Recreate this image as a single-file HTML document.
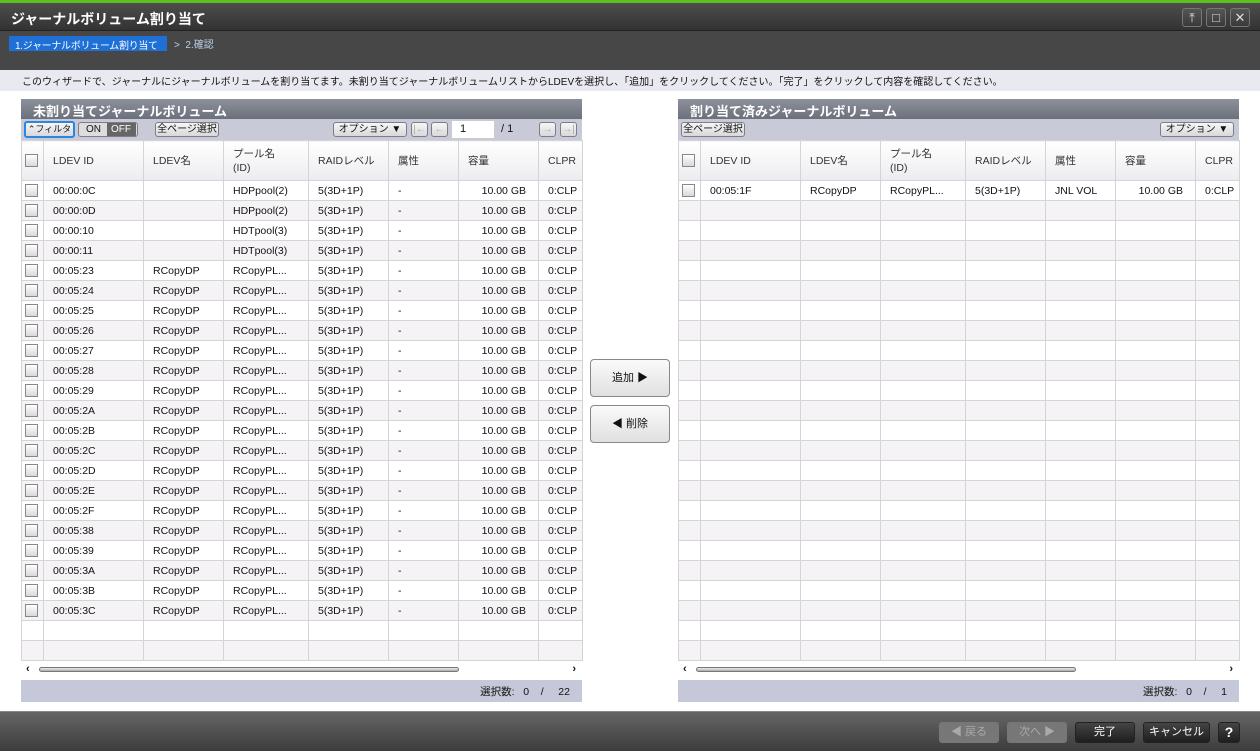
<!DOCTYPE html>
<html><head><meta charset="utf-8"><style>
*{margin:0;padding:0;box-sizing:border-box}
body{width:1260px;height:751px;overflow:hidden;background:#fff;font-family:"Liberation Sans","Noto Sans CJK JP",sans-serif;font-size:11px;color:#111;position:relative}
.abs{position:absolute}
#top{left:0;top:0;width:1260px;height:3px;background:#5fbf1f}
#title{left:0;top:3px;width:1260px;height:28px;background:linear-gradient(#4e4e4e,#333);color:#fff;font-size:14px;font-weight:bold;padding:6px 11px;border-bottom:1px solid #222}
#crumb{left:0;top:31px;width:1260px;height:39px;background:#474747}
#crumb .s1{position:absolute;left:9px;top:5px;width:158px;height:15px;background:#1e6fd6;color:#fff;padding:1px 6px;font-size:10px;white-space:nowrap;overflow:hidden;letter-spacing:-0.3px}
#crumb .s2{position:absolute;left:174px;top:5px;color:#bcd0ea;font-size:10px;white-space:nowrap}
#desc{left:0;top:70px;width:1260px;height:21px;background:#e9e9f1;padding:3px 22px;font-size:10px;white-space:nowrap}
.wc{top:8px;width:20px;height:19px;border:1px solid #777;border-radius:3px;background:linear-gradient(#555,#3a3a3a);color:#ddd;text-align:center;font-size:13px;line-height:17px}
.ph{height:20px;background:linear-gradient(#8d919c,#6b707b);color:#fff;font-weight:bold;font-size:13px;padding:2px 12px;white-space:nowrap}
.tb{height:21px;background:#c9cad8;position:relative}
.btn{position:absolute;height:15px;border:1px solid #7d7d88;border-radius:3px;background:linear-gradient(#f6f6f6,#d8d8dc);font-size:10px;line-height:13px;text-align:center;white-space:nowrap;overflow:hidden}
table{border-collapse:collapse;table-layout:fixed;background:#fff}
td,th{height:20px;border:1px solid #d4d4d8;white-space:nowrap;overflow:hidden;padding-left:9px;font-weight:normal;text-align:left;font-size:10.5px}
th{height:40px;background:linear-gradient(#fff,#ececf0);color:#333;line-height:14px}
tr.a td{background:#fff}
tr.b td{background:#f6f3f6}
td.c,th.c{padding-left:3px}
.cb{display:inline-block;width:13px;height:13px;border:1px solid #888;background:linear-gradient(#fff,#d8d8d8);vertical-align:middle}
td.r{text-align:right;padding-right:12px}
.sc{height:19px;background:#fff;position:relative}
.ft{height:22px;background:#c5c8d8;text-align:right;padding:4px 12px;font-size:10.5px}
.mid{width:80px;height:38px;border:1px solid #888;border-radius:4px;background:linear-gradient(#fafafa,#e0e0e0);text-align:center;line-height:36px;font-size:11px}
#foot{left:0;top:711px;width:1260px;height:40px;background:linear-gradient(#666,#3c3c3c);border-top:1px solid #888}
.fb{position:absolute;top:10px;height:21px;border:1px solid #222;border-radius:3px;background:linear-gradient(#444,#1e1e1e);color:#fff;text-align:center;line-height:19px;font-size:11px}
.fb.d{background:#777;border-color:#777;color:#aaa}
</style></head><body>
<div id="top" class="abs"></div>
<div id="title" class="abs">ジャーナルボリューム割り当て</div>
<div class="abs wc" style="left:1182px">&#x2912;</div>
<div class="abs wc" style="left:1206px">&#9633;</div>
<div class="abs wc" style="left:1230px">&#10005;</div>
<div id="crumb" class="abs"><div class="s1">1.ジャーナルボリューム割り当て</div><div class="s2">&gt;&nbsp; 2.確認</div></div>
<div id="desc" class="abs">このウィザードで、ジャーナルにジャーナルボリュームを割り当てます。未割り当てジャーナルボリュームリストからLDEVを選択し、「追加」をクリックしてください。「完了」をクリックして内容を確認してください。</div>

<div class="abs" style="left:21px;top:99px;width:561px">
<div class="ph">未割り当てジャーナルボリューム</div>
<div class="tb">
<div class="btn" style="left:3px;top:2px;width:51px;height:17px;border:2px solid #2b86e0;line-height:13px;font-size:9px">&#8963;フィルタ</div>
<div class="btn" style="left:57px;top:3px;width:60px;background:#ddd"><span style="display:inline-block;width:26px">ON</span><span style="display:inline-block;width:29px;background:#666;color:#fff">OFF</span></div>
<div class="btn" style="left:134px;top:3px;width:64px">全ページ選択</div>
<div class="btn" style="left:312px;top:3px;width:74px">オプション ▼</div>
<div class="btn" style="left:390px;top:3px;width:17px;color:#aaa">|←</div>
<div class="btn" style="left:410px;top:3px;width:17px;color:#aaa">←</div>
<div style="position:absolute;left:431px;top:2px;width:42px;height:17px;background:#fff;padding:2px 8px">1</div>
<div style="position:absolute;left:480px;top:4px">/ 1</div>
<div class="btn" style="left:518px;top:3px;width:17px;color:#aaa">→</div>
<div class="btn" style="left:539px;top:3px;width:17px;color:#aaa">→|</div>
</div>
<table style="width:561px">
<colgroup><col style="width:22px"><col style="width:100px"><col style="width:80px"><col style="width:85px"><col style="width:80px"><col style="width:70px"><col style="width:80px"><col style="width:44px"></colgroup>
<tr><th class="c"><span class="cb"></span></th><th>LDEV ID</th><th>LDEV名</th><th>プール名<br>(ID)</th><th>RAIDレベル</th><th>属性</th><th>容量</th><th>CLPR</th></tr>
<tr class="a"><td class="c"><span class="cb"></span></td><td>00:00:0C</td><td></td><td>HDPpool(2)</td><td>5(3D+1P)</td><td>-</td><td class="r">10.00 GB</td><td>0:CLP</td></tr>
<tr class="b"><td class="c"><span class="cb"></span></td><td>00:00:0D</td><td></td><td>HDPpool(2)</td><td>5(3D+1P)</td><td>-</td><td class="r">10.00 GB</td><td>0:CLP</td></tr>
<tr class="a"><td class="c"><span class="cb"></span></td><td>00:00:10</td><td></td><td>HDTpool(3)</td><td>5(3D+1P)</td><td>-</td><td class="r">10.00 GB</td><td>0:CLP</td></tr>
<tr class="b"><td class="c"><span class="cb"></span></td><td>00:00:11</td><td></td><td>HDTpool(3)</td><td>5(3D+1P)</td><td>-</td><td class="r">10.00 GB</td><td>0:CLP</td></tr>
<tr class="a"><td class="c"><span class="cb"></span></td><td>00:05:23</td><td>RCopyDP</td><td>RCopyPL...</td><td>5(3D+1P)</td><td>-</td><td class="r">10.00 GB</td><td>0:CLP</td></tr>
<tr class="b"><td class="c"><span class="cb"></span></td><td>00:05:24</td><td>RCopyDP</td><td>RCopyPL...</td><td>5(3D+1P)</td><td>-</td><td class="r">10.00 GB</td><td>0:CLP</td></tr>
<tr class="a"><td class="c"><span class="cb"></span></td><td>00:05:25</td><td>RCopyDP</td><td>RCopyPL...</td><td>5(3D+1P)</td><td>-</td><td class="r">10.00 GB</td><td>0:CLP</td></tr>
<tr class="b"><td class="c"><span class="cb"></span></td><td>00:05:26</td><td>RCopyDP</td><td>RCopyPL...</td><td>5(3D+1P)</td><td>-</td><td class="r">10.00 GB</td><td>0:CLP</td></tr>
<tr class="a"><td class="c"><span class="cb"></span></td><td>00:05:27</td><td>RCopyDP</td><td>RCopyPL...</td><td>5(3D+1P)</td><td>-</td><td class="r">10.00 GB</td><td>0:CLP</td></tr>
<tr class="b"><td class="c"><span class="cb"></span></td><td>00:05:28</td><td>RCopyDP</td><td>RCopyPL...</td><td>5(3D+1P)</td><td>-</td><td class="r">10.00 GB</td><td>0:CLP</td></tr>
<tr class="a"><td class="c"><span class="cb"></span></td><td>00:05:29</td><td>RCopyDP</td><td>RCopyPL...</td><td>5(3D+1P)</td><td>-</td><td class="r">10.00 GB</td><td>0:CLP</td></tr>
<tr class="b"><td class="c"><span class="cb"></span></td><td>00:05:2A</td><td>RCopyDP</td><td>RCopyPL...</td><td>5(3D+1P)</td><td>-</td><td class="r">10.00 GB</td><td>0:CLP</td></tr>
<tr class="a"><td class="c"><span class="cb"></span></td><td>00:05:2B</td><td>RCopyDP</td><td>RCopyPL...</td><td>5(3D+1P)</td><td>-</td><td class="r">10.00 GB</td><td>0:CLP</td></tr>
<tr class="b"><td class="c"><span class="cb"></span></td><td>00:05:2C</td><td>RCopyDP</td><td>RCopyPL...</td><td>5(3D+1P)</td><td>-</td><td class="r">10.00 GB</td><td>0:CLP</td></tr>
<tr class="a"><td class="c"><span class="cb"></span></td><td>00:05:2D</td><td>RCopyDP</td><td>RCopyPL...</td><td>5(3D+1P)</td><td>-</td><td class="r">10.00 GB</td><td>0:CLP</td></tr>
<tr class="b"><td class="c"><span class="cb"></span></td><td>00:05:2E</td><td>RCopyDP</td><td>RCopyPL...</td><td>5(3D+1P)</td><td>-</td><td class="r">10.00 GB</td><td>0:CLP</td></tr>
<tr class="a"><td class="c"><span class="cb"></span></td><td>00:05:2F</td><td>RCopyDP</td><td>RCopyPL...</td><td>5(3D+1P)</td><td>-</td><td class="r">10.00 GB</td><td>0:CLP</td></tr>
<tr class="b"><td class="c"><span class="cb"></span></td><td>00:05:38</td><td>RCopyDP</td><td>RCopyPL...</td><td>5(3D+1P)</td><td>-</td><td class="r">10.00 GB</td><td>0:CLP</td></tr>
<tr class="a"><td class="c"><span class="cb"></span></td><td>00:05:39</td><td>RCopyDP</td><td>RCopyPL...</td><td>5(3D+1P)</td><td>-</td><td class="r">10.00 GB</td><td>0:CLP</td></tr>
<tr class="b"><td class="c"><span class="cb"></span></td><td>00:05:3A</td><td>RCopyDP</td><td>RCopyPL...</td><td>5(3D+1P)</td><td>-</td><td class="r">10.00 GB</td><td>0:CLP</td></tr>
<tr class="a"><td class="c"><span class="cb"></span></td><td>00:05:3B</td><td>RCopyDP</td><td>RCopyPL...</td><td>5(3D+1P)</td><td>-</td><td class="r">10.00 GB</td><td>0:CLP</td></tr>
<tr class="b"><td class="c"><span class="cb"></span></td><td>00:05:3C</td><td>RCopyDP</td><td>RCopyPL...</td><td>5(3D+1P)</td><td>-</td><td class="r">10.00 GB</td><td>0:CLP</td></tr>
<tr class="a"><td></td><td></td><td></td><td></td><td></td><td></td><td></td><td></td></tr>
<tr class="b"><td></td><td></td><td></td><td></td><td></td><td></td><td></td><td></td></tr>
</table>
<div class="sc"><span style="position:absolute;left:5px;top:2px;font-weight:bold">‹</span><div style="position:absolute;left:18px;top:6px;width:420px;height:5px;border:1px solid #777;border-radius:3px;background:linear-gradient(#eee,#aaa)"></div><span style="position:absolute;right:6px;top:2px;font-weight:bold">›</span></div>
<div class="ft">選択数:&nbsp;&nbsp; 0 &nbsp;&nbsp;&nbsp;/&nbsp;&nbsp;&nbsp;&nbsp; 22</div>
</div>

<div class="abs mid" style="left:590px;top:359px">追加 ▶</div>
<div class="abs mid" style="left:590px;top:405px">◀ 削除</div>

<div class="abs" style="left:678px;top:99px;width:561px">
<div class="ph">割り当て済みジャーナルボリューム</div>
<div class="tb">
<div class="btn" style="left:3px;top:3px;width:64px">全ページ選択</div>
<div class="btn" style="left:482px;top:3px;width:74px">オプション ▼</div>
</div>
<table style="width:561px">
<colgroup><col style="width:22px"><col style="width:100px"><col style="width:80px"><col style="width:85px"><col style="width:80px"><col style="width:70px"><col style="width:80px"><col style="width:44px"></colgroup>
<tr><th class="c"><span class="cb"></span></th><th>LDEV ID</th><th>LDEV名</th><th>プール名<br>(ID)</th><th>RAIDレベル</th><th>属性</th><th>容量</th><th>CLPR</th></tr>
<tr class="a"><td class="c"><span class="cb"></span></td><td>00:05:1F</td><td>RCopyDP</td><td>RCopyPL...</td><td>5(3D+1P)</td><td>JNL VOL</td><td class="r">10.00 GB</td><td>0:CLP</td></tr>
<tr class="b"><td></td><td></td><td></td><td></td><td></td><td></td><td></td><td></td></tr>
<tr class="a"><td></td><td></td><td></td><td></td><td></td><td></td><td></td><td></td></tr>
<tr class="b"><td></td><td></td><td></td><td></td><td></td><td></td><td></td><td></td></tr>
<tr class="a"><td></td><td></td><td></td><td></td><td></td><td></td><td></td><td></td></tr>
<tr class="b"><td></td><td></td><td></td><td></td><td></td><td></td><td></td><td></td></tr>
<tr class="a"><td></td><td></td><td></td><td></td><td></td><td></td><td></td><td></td></tr>
<tr class="b"><td></td><td></td><td></td><td></td><td></td><td></td><td></td><td></td></tr>
<tr class="a"><td></td><td></td><td></td><td></td><td></td><td></td><td></td><td></td></tr>
<tr class="b"><td></td><td></td><td></td><td></td><td></td><td></td><td></td><td></td></tr>
<tr class="a"><td></td><td></td><td></td><td></td><td></td><td></td><td></td><td></td></tr>
<tr class="b"><td></td><td></td><td></td><td></td><td></td><td></td><td></td><td></td></tr>
<tr class="a"><td></td><td></td><td></td><td></td><td></td><td></td><td></td><td></td></tr>
<tr class="b"><td></td><td></td><td></td><td></td><td></td><td></td><td></td><td></td></tr>
<tr class="a"><td></td><td></td><td></td><td></td><td></td><td></td><td></td><td></td></tr>
<tr class="b"><td></td><td></td><td></td><td></td><td></td><td></td><td></td><td></td></tr>
<tr class="a"><td></td><td></td><td></td><td></td><td></td><td></td><td></td><td></td></tr>
<tr class="b"><td></td><td></td><td></td><td></td><td></td><td></td><td></td><td></td></tr>
<tr class="a"><td></td><td></td><td></td><td></td><td></td><td></td><td></td><td></td></tr>
<tr class="b"><td></td><td></td><td></td><td></td><td></td><td></td><td></td><td></td></tr>
<tr class="a"><td></td><td></td><td></td><td></td><td></td><td></td><td></td><td></td></tr>
<tr class="b"><td></td><td></td><td></td><td></td><td></td><td></td><td></td><td></td></tr>
<tr class="a"><td></td><td></td><td></td><td></td><td></td><td></td><td></td><td></td></tr>
<tr class="b"><td></td><td></td><td></td><td></td><td></td><td></td><td></td><td></td></tr>
</table>
<div class="sc"><span style="position:absolute;left:5px;top:2px;font-weight:bold">‹</span><div style="position:absolute;left:18px;top:6px;width:380px;height:5px;border:1px solid #777;border-radius:3px;background:linear-gradient(#eee,#aaa)"></div><span style="position:absolute;right:6px;top:2px;font-weight:bold">›</span></div>
<div class="ft">選択数:&nbsp;&nbsp; 0 &nbsp;&nbsp;&nbsp;/&nbsp;&nbsp;&nbsp;&nbsp; 1</div>
</div>

<div id="foot" class="abs">
<div class="fb d" style="left:939px;width:60px">◀ 戻る</div>
<div class="fb d" style="left:1007px;width:60px">次へ ▶</div>
<div class="fb" style="left:1075px;width:60px">完了</div>
<div class="fb" style="left:1143px;width:67px">キャンセル</div>
<div class="fb" style="left:1218px;width:22px;font-weight:bold;font-size:14px">?</div>
</div>
</body></html>
